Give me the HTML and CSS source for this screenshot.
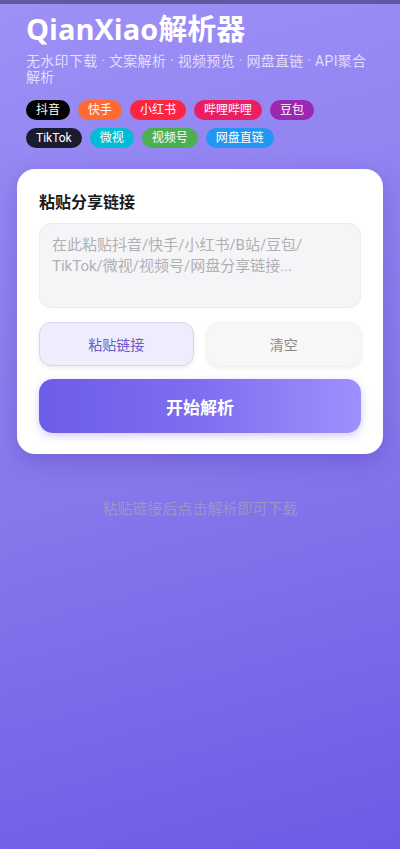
FILE: index.html
```html
<!DOCTYPE html>
<html lang="zh-CN">
<head>
    <meta charset="UTF-8">
    <meta name="viewport" content="width=device-width, initial-scale=1.0">
    <title>QianXiao解析器</title>
    <link rel="stylesheet" href="styles.css">
</head>
<body>

<div class="status-bar"></div>

<div class="header">
    <h1>QianXiao解析器</h1>
    <p class="subtitle">无水印下载 · 文案解析 · 视频预览 · 网盘直链 · API聚合解析</p>
    <div class="tags">
        <span class="tag douyin">抖音</span>
        <span class="tag kuaishou">快手</span>
        <span class="tag xhs">小红书</span>
        <span class="tag bili">哔哩哔哩</span>
        <span class="tag doubao">豆包</span>
        <span class="tag tiktok">TikTok</span>
        <span class="tag weishi">微视</span>
        <span class="tag channels">视频号</span>
        <span class="tag pan">网盘直链</span>
    </div>
</div>

<div class="card">
    <h2>粘贴分享链接</h2>
    <textarea id="linkInput" placeholder="在此粘贴抖音/快手/小红书/B站/豆包/&#10;TikTok/微视/视频号/网盘分享链接..."></textarea>
    <div class="btn-row">
        <button type="button" class="btn-paste" onclick="pasteLink()">粘贴链接</button>
        <button type="button" class="btn-clear" onclick="clearLink()">清空</button>
    </div>
    <button type="button" class="btn-parse">开始解析</button>
</div>

<p class="hint">粘贴链接后点击解析即可下载</p>

<script>
    function pasteLink() {
        if (navigator.clipboard) {
            navigator.clipboard.readText().then(text => {
                document.getElementById('linkInput').value = text;
            }).catch(() => {});
        }
    }

    function clearLink() {
        document.getElementById('linkInput').value = '';
    }
</script>

</body>
</html>
```

FILE: styles.css
```css
html {
    min-height: 100%;
    background: linear-gradient(165deg, #9d90f6 0%, #8677ec 55%, #6d5be5 100%);
}
body {
    margin: 0;
    min-height: 849px;
    font-family: Roboto, "Noto Sans CJK SC", sans-serif;
}
.status-bar {
    height: 4px;
    background-color: #5e5a9e;
}
.header {
    padding: 5px 26px 0;
    color: #fff;
}
.header h1 {
    margin: 0;
    font-family: "Open Sans", "Noto Sans CJK SC", sans-serif;
    font-size: 29px;
    font-weight: bold;
    line-height: 40px;
}
.subtitle {
    margin: 4px 0 0;
    padding-right: 4px;
    font-size: 14px;
    line-height: 16px;
    letter-spacing: 0.3px;
    color: rgba(255, 255, 255, 0.72);
}
.tags {
    display: flex;
    flex-wrap: wrap;
    gap: 8px;
    margin-top: 15px;
    padding-right: 20px;
}
.tag {
    height: 20px;
    line-height: 20px;
    padding: 0 10px;
    border-radius: 10px;
    font-size: 12px;
    color: #fff;
}
.douyin { background-color: #000; }
.kuaishou { background-color: #ff6a33; }
.xhs { background-color: #ff2442; }
.bili { background-color: #e91e63; }
.doubao { background-color: #9c27b0; }
.tiktok { background-color: #1b1b2f; }
.weishi { background-color: #00bcd4; }
.channels { background-color: #4caf50; }
.pan { background-color: #2196f3; }

.card {
    margin: 21px 17px 0;
    padding: 24px 22px 21px;
    background-color: #fff;
    border-radius: 18px;
    box-shadow: 0 8px 24px rgba(60, 40, 160, 0.28);
}
.card h2 {
    margin: 0 0 10px;
    font-size: 16px;
    line-height: 20px;
    color: #1a1a1a;
}
.card textarea {
    display: block;
    width: 100%;
    height: 85px;
    box-sizing: border-box;
    padding: 11px 12px;
    border: 1px solid #ececef;
    border-radius: 12px;
    background-color: #f5f5f7;
    font-family: Roboto, "Noto Sans CJK SC", sans-serif;
    font-size: 15px;
    line-height: 21px;
    resize: none;
    outline: none;
}
.card textarea::placeholder {
    color: #b0b0b4;
}
.btn-row {
    display: flex;
    gap: 13px;
    margin-top: 14px;
}
.btn-row button {
    flex: 1;
    height: 44px;
    border-radius: 12px;
    font-family: Roboto, "Noto Sans CJK SC", sans-serif;
    font-size: 14px;
    cursor: pointer;
    box-shadow: 0 2px 4px rgba(0, 0, 0, 0.08);
}
.btn-paste {
    background-color: #efecfe;
    border: 1px solid #d9d4f3;
    color: #6a5acd;
}
.btn-clear {
    background-color: #f7f7f7;
    border: 1px solid #f2f2f2;
    color: #8a8a8a;
}
.btn-parse {
    display: block;
    width: 100%;
    height: 54px;
    margin-top: 13px;
    border: none;
    border-radius: 14px;
    background: linear-gradient(90deg, #6c5ce7 0%, #7e6ff0 50%, #9d90fd 100%);
    color: #fff;
    font-family: Roboto, "Noto Sans CJK SC", sans-serif;
    font-size: 17px;
    font-weight: bold;
    box-shadow: 0 3px 8px rgba(108, 92, 231, 0.3);
    cursor: pointer;
}
.hint {
    margin: 43px 0 0;
    text-align: center;
    font-size: 15px;
    color: rgba(160, 156, 190, 0.85);
}
```
